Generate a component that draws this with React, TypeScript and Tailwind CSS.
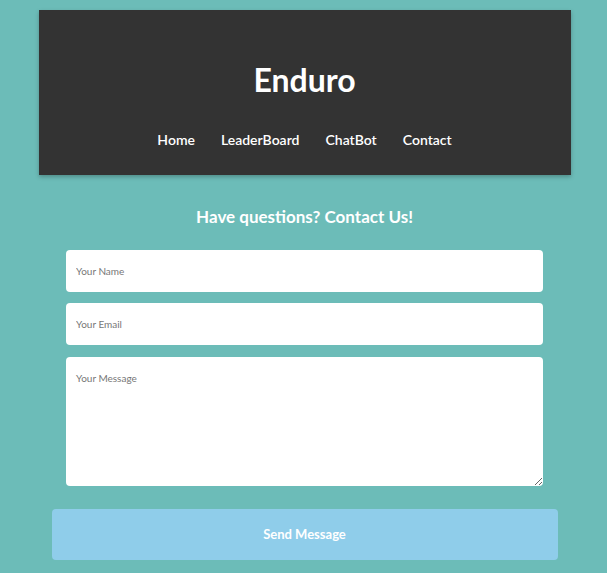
export default function App() {
  const links = ['Home', 'LeaderBoard', 'ChatBot', 'Contact'];

  return (
    <div
      className="min-h-[573px] bg-[#6cbcb8] pt-[10px] pb-[13px] pl-[2px]"
      style={{ fontFamily: 'Lato, "Open Sans", sans-serif' }}
    >
      {/* header */}
      <header className="mx-auto flex h-[165px] w-[532px] flex-col items-center bg-[#333333] shadow-[0_2px_4px_rgba(0,0,0,0.25)]">
        <h1 className="mt-[50px] text-[32px] font-bold leading-[40px] text-white">Enduro</h1>
        <nav className="mt-[28px] flex items-center gap-[26px] text-[14px] font-semibold leading-[24px] text-white">
          {links.map((l) => (
            <a key={l} href="#">
              {l}
            </a>
          ))}
        </nav>
      </header>

      {/* contact */}
      <main className="mx-auto flex w-[507px] flex-col items-center">
        <h2 className="mt-[30px] text-[17px] font-bold leading-[24px] text-white">
          Have questions? Contact Us!
        </h2>
        <form className="mt-[21px] flex w-full flex-col items-center">
          <input
            placeholder="Your Name"
            className="h-[42px] w-[477px] rounded-[4px] bg-white px-[10px] text-[10px] text-gray-700 outline-none placeholder:text-[#777]"
          />
          <input
            placeholder="Your Email"
            className="mt-[11px] h-[42px] w-[477px] rounded-[4px] bg-white px-[10px] text-[10px] text-gray-700 outline-none placeholder:text-[#777]"
          />
          <textarea
            placeholder="Your Message"
            className="mt-[12px] h-[129px] w-[477px] rounded-[4px] bg-white px-[10px] py-[14px] text-[10px] text-gray-700 outline-none placeholder:text-[#777]"
          />
          <button
            type="button"
            className="mt-[23px] h-[51px] w-[506px] rounded-[4px] bg-[#8fcdea] text-[13px] font-bold text-white"
          >
            Send Message
          </button>
        </form>
      </main>
    </div>
  );
}
